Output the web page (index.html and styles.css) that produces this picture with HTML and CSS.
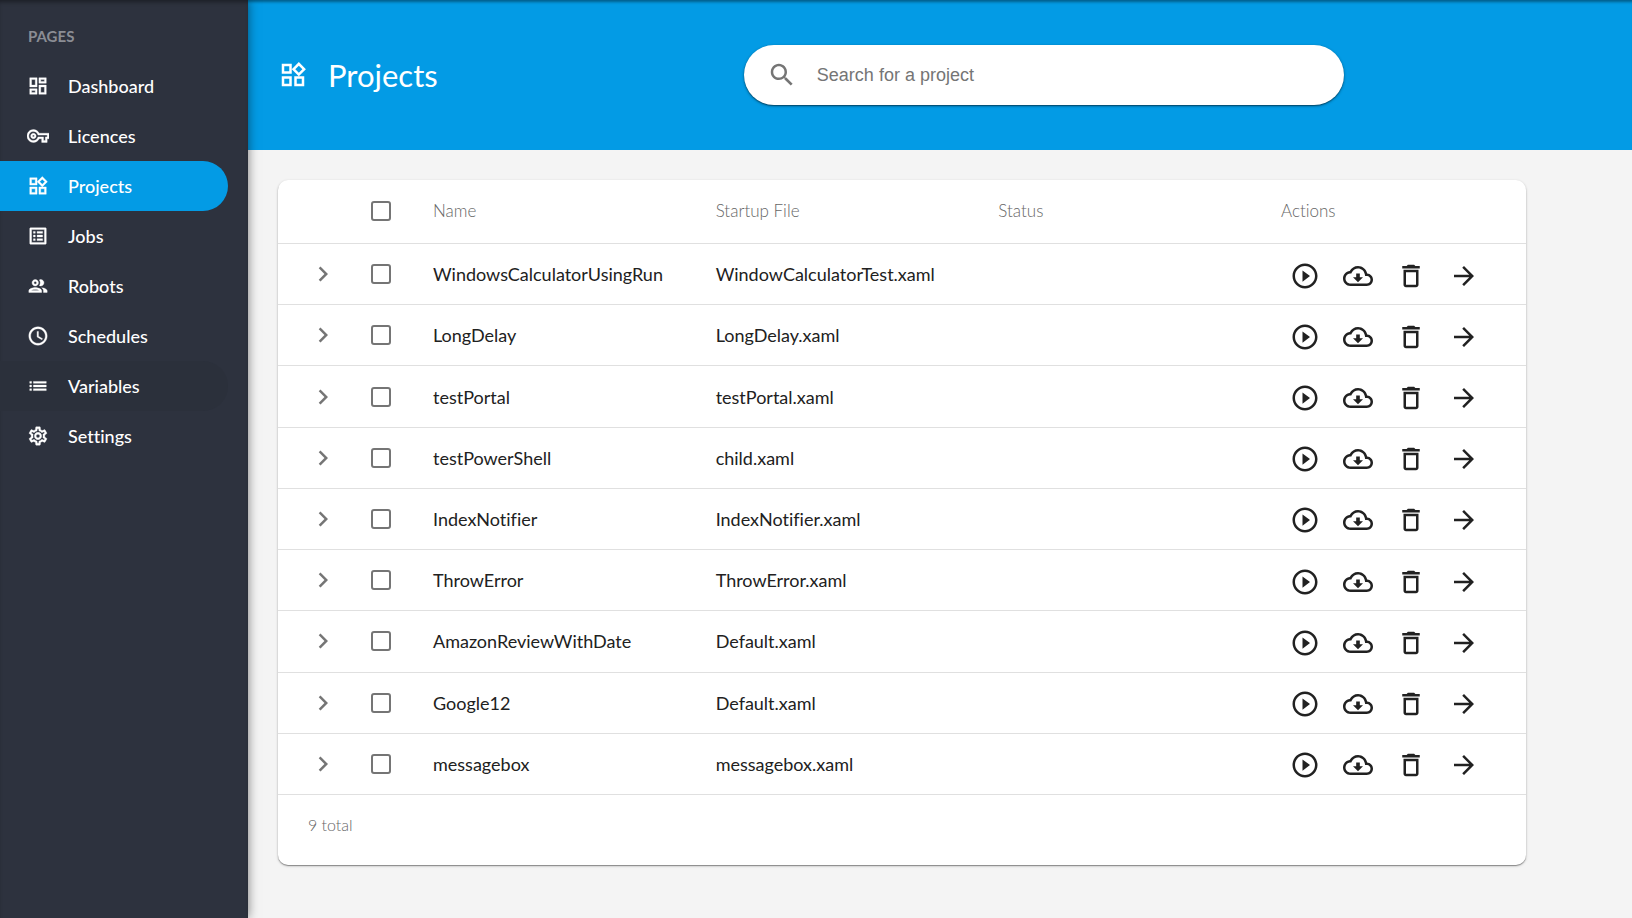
FILE: index.html
```html
<!DOCTYPE html>
<html lang="en">
<head>
<meta charset="utf-8">
<title>Projects</title>
<link rel="stylesheet" href="styles.css">
</head>
<body>
<svg class="sprite" aria-hidden="true">
  <symbol id="dashboard" viewBox="0 0 24 24"><path d="M19 5v2h-4V5h4M9 5v6H5V5h4m10 8v6h-4v-6h4M9 17v2H5v-2h4M21 3h-8v6h8V3zM11 3H3v10h8V3zm10 8h-8v10h8V11zm-10 4H3v6h8v-6z"/></symbol>
  <symbol id="key" viewBox="0 0 24 24"><path d="M22 19h-6v-4h-2.68c-1.14 2.42-3.6 4-6.32 4-3.86 0-7-3.14-7-7s3.14-7 7-7c2.72 0 5.17 1.58 6.32 4H24v6h-2v4zm-4-2h2v-4h2v-2H11.94l-.23-.67C11.01 8.34 9.11 7 7 7c-2.76 0-5 2.24-5 5s2.24 5 5 5c2.11 0 4.01-1.34 4.71-3.33l.23-.67H18v4zM7 15c-1.65 0-3-1.35-3-3s1.35-3 3-3 3 1.35 3 3-1.35 3-3 3zm0-4c-.55 0-1 .45-1 1s.45 1 1 1 1-.45 1-1-.45-1-1-1z"/></symbol>
  <symbol id="widgets" viewBox="0 0 24 24"><path d="M16.66 4.52l2.83 2.83-2.83 2.83-2.83-2.83 2.83-2.83M9 5v4H5V5h4m10 10v4h-4v-4h4M9 15v4H5v-4h4m7.66-13.31L11 7.34 16.66 13l5.66-5.66-5.66-5.65zM11 3H3v8h8V3zm10 10h-8v8h8v-8zm-10 0H3v8h8v-8z"/></symbol>
  <symbol id="jobs" viewBox="0 0 24 24"><path d="M19 5v14H5V5h14m1.1-2H3.9c-.5 0-.9.4-.9.9v16.2c0 .4.4.9.9.9h16.2c.4 0 .9-.5.9-.9V3.9c0-.5-.5-.9-.9-.9zM11 7h6v2h-6V7zm0 4h6v2h-6v-2zm0 4h6v2h-6zM7 7h2v2H7zm0 4h2v2H7zm0 4h2v2H7z"/></symbol>
  <symbol id="people" viewBox="0 0 24 24"><path d="M9 13.75c-2.34 0-7 1.17-7 3.5V19h14v-1.75c0-2.33-4.66-3.5-7-3.5zM4.34 17c.84-.58 2.87-1.25 4.66-1.25s3.82.67 4.66 1.25H4.34zM9 12c1.93 0 3.5-1.57 3.5-3.5S10.930 5 9 5 5.500 6.570 5.500 8.500 7.070 12 9 12zm0-5c.83 0 1.500.67 1.500 1.500S9.830 10 9 10s-1.500-.67-1.500-1.500S8.170 7 9 7zm7.040 6.810c1.160.84 1.960 1.960 1.960 3.440V19h4v-1.750c0-2.020-3.500-3.170-5.960-3.440zM15 12c1.930 0 3.500-1.570 3.500-3.500S16.930 5 15 5c-.54 0-1.040.13-1.500.35.63.89 1 1.980 1 3.150s-.37 2.260-1 3.150c.46.22.96.35 1.500.35z"/></symbol>
  <symbol id="clock" viewBox="0 0 24 24"><path d="M11.990 2C6.470 2 2 6.480 2 12s4.470 10 9.990 10C17.520 22 22 17.520 22 12S17.520 2 11.990 2zM12 20c-4.420 0-8-3.580-8-8s3.580-8 8-8 8 3.580 8 8-3.580 8-8 8zm.5-13H11v6l5.250 3.150.75-1.230-4.500-2.670z"/></symbol>
  <symbol id="list" viewBox="0 0 24 24"><path d="M3 13h2v-2H3v2zm0 4h2v-2H3v2zm0-8h2V7H3v2zm4 4h14v-2H7v2zm0 4h14v-2H7v2zM7 7v2h14V7H7z"/></symbol>
  <symbol id="gear" viewBox="0 0 24 24"><path d="M19.430 12.980c.04-.32.07-.64.07-.98s-.03-.66-.07-.98l2.110-1.650c.19-.15.24-.42.12-.64l-2-3.460c-.12-.22-.39-.3-.61-.22l-2.490 1c-.52-.4-1.080-.73-1.690-.98l-.38-2.650C14.460 2.180 14.250 2 14 2h-4c-.25 0-.46.18-.49.42l-.38 2.650c-.61.25-1.170.59-1.690.98l-2.490-1c-.23-.09-.49 0-.61.22l-2 3.460c-.13.22-.07.49.12.64l2.110 1.650c-.04.32-.07.65-.07.98s.03.66.07.98l-2.110 1.650c-.19.15-.24.42-.12.64l2 3.460c.12.22.39.3.61.22l2.490-1c.52.4 1.080.73 1.690.98l.38 2.650c.03.24.24.42.49.42h4c.25 0 .46-.18.49-.42l.38-2.650c.61-.25 1.170-.59 1.690-.98l2.490 1c.23.09.49 0 .61-.22l2-3.460c.12-.22.07-.49-.12-.64l-2.110-1.650zm-1.980-1.710c.04.31.05.52.05.73s-.02.43-.05.73l-.14 1.130.89.7 1.080.84-.7 1.210-1.270-.51-1.040-.42-.9.68c-.43.32-.84.56-1.250.73l-1.060.43-.16 1.130-.2 1.350h-1.400l-.19-1.350-.16-1.130-1.060-.43c-.43-.18-.83-.41-1.230-.71l-.91-.7-1.060.43-1.270.51-.7-1.210 1.080-.84.89-.7-.14-1.130c-.03-.31-.05-.54-.05-.74s.02-.43.05-.73l.14-1.130-.89-.7-1.080-.84.7-1.210 1.270.51 1.040.42.9-.68c.43-.32.84-.56 1.250-.73l1.060-.43.16-1.130.2-1.350h1.390l.19 1.350.16 1.130 1.060.43c.43.18.83.41 1.230.71l.91.7 1.060-.43 1.270-.51.7 1.210-1.070.85-.89.7.14 1.130zM12 8c-2.210 0-4 1.790-4 4s1.790 4 4 4 4-1.790 4-4-1.790-4-4-4zm0 6c-1.100 0-2-.9-2-2s.9-2 2-2 2 .9 2 2-.9 2-2 2z"/></symbol>
  <symbol id="search" viewBox="0 0 24 24"><path d="M15.500 14h-.79l-.28-.27C15.410 12.590 16 11.110 16 9.500 16 5.910 13.090 3 9.500 3S3 5.910 3 9.500 5.910 16 9.500 16c1.610 0 3.090-.59 4.230-1.570l.27.28v.79l5 4.990L20.490 19l-4.990-5zm-6 0C7.010 14 5 11.990 5 9.500S7.010 5 9.500 5 14 7.010 14 9.500 11.990 14 9.500 14z"/></symbol>
  <symbol id="chevron" viewBox="0 0 24 24"><path d="M10 6L8.590 7.410 13.170 12l-4.580 4.590L10 18l6-6z"/></symbol>
  <symbol id="play" viewBox="0 0 24 24"><path d="M10 16.500l6-4.500-6-4.500v9zM12 2C6.480 2 2 6.480 2 12s4.480 10 10 10 10-4.480 10-10S17.520 2 12 2zm0 18c-4.410 0-8-3.590-8-8s3.590-8 8-8 8 3.590 8 8-3.590 8-8 8z"/></symbol>
  <symbol id="cloud" viewBox="0 0 24 24"><path d="M19.350 10.040C18.670 6.590 15.640 4 12 4 9.110 4 6.610 5.640 5.360 8.040 2.350 8.360 0 10.900 0 14c0 3.310 2.690 6 6 6h13c2.760 0 5-2.240 5-5 0-2.640-2.050-4.780-4.650-4.960zM19 18H6c-2.210 0-4-1.790-4-4 0-2.050 1.530-3.760 3.560-3.970l1.070-.11.5-.95C8.080 7.140 9.940 6 12 6c2.620 0 4.880 1.860 5.390 4.430l.3 1.500 1.530.11c1.560.1 2.780 1.410 2.780 2.960 0 1.650-1.350 3-3 3zm-5.550-8h-2.900v3H8l4 4 4-4h-2.550z"/></symbol>
  <symbol id="trash" viewBox="0 0 24 24"><path d="M6 19c0 1.100.9 2 2 2h8c1.100 0 2-.9 2-2V7H6v12zM8 9h8v10H8V9zm7.500-5l-1-1h-5l-1 1H5v2h14V4z"/></symbol>
  <symbol id="arrow" viewBox="0 0 24 24"><path d="M12 4l-1.410 1.410L16.170 11H4v2h12.170l-5.580 5.590L12 20l8-8z"/></symbol>
</svg>
<div class="app">
  <nav class="sidebar" aria-label="Pages">
    <h2 class="sidebar-title">PAGES</h2>
    <a class="nav-item" href="#dashboard"><svg class="nav-icon"><use href="#dashboard"/></svg>Dashboard</a>
    <a class="nav-item" href="#licences"><svg class="nav-icon"><use href="#key"/></svg>Licences</a>
    <a class="nav-item active" href="#projects" aria-current="page"><svg class="nav-icon"><use href="#widgets"/></svg>Projects</a>
    <a class="nav-item" href="#jobs"><svg class="nav-icon"><use href="#jobs"/></svg>Jobs</a>
    <a class="nav-item" href="#robots"><svg class="nav-icon"><use href="#people"/></svg>Robots</a>
    <a class="nav-item" href="#schedules"><svg class="nav-icon"><use href="#clock"/></svg>Schedules</a>
    <a class="nav-item hovered" href="#variables"><svg class="nav-icon"><use href="#list"/></svg>Variables</a>
    <a class="nav-item" href="#settings"><svg class="nav-icon"><use href="#gear"/></svg>Settings</a>
  </nav>
  <div class="page">
    <header class="page-header">
      <svg class="icon"><use href="#widgets"/></svg>
      <h1 class="page-title">Projects</h1>
      <div class="search-area">
        <label class="search">
          <svg class="search-icon" role="img" aria-label="Search"><use href="#search"/></svg>
          <input class="search-input" type="text" placeholder="Search for a project">
        </label>
      </div>
    </header>
    <main class="content">
      <section class="card">
        <table class="projects">
          <colgroup><col class="col-expand"><col class="col-check"><col><col><col><col class="col-actions"></colgroup>
          <thead>
            <tr><th></th><th><input class="check" type="checkbox" aria-label="Select all"></th><th>Name</th><th>Startup File</th><th>Status</th><th>Actions</th></tr>
          </thead>
          <tbody id="rows"></tbody>
        </table>
        <footer class="card-footer">9 total</footer>
      </section>
    </main>
  </div>
</div>
<script src="app.js"></script>
</body>
</html>
```
FILE: app.js
```js
const projects = [
  ["WindowsCalculatorUsingRun", "WindowCalculatorTest.xaml"],
  ["LongDelay", "LongDelay.xaml"],
  ["testPortal", "testPortal.xaml"],
  ["testPowerShell", "child.xaml"],
  ["IndexNotifier", "IndexNotifier.xaml"],
  ["ThrowError", "ThrowError.xaml"],
  ["AmazonReviewWithDate", "Default.xaml"],
  ["Google12", "Default.xaml"],
  ["messagebox", "messagebox.xaml"]
];
const button = (icon, label) =>
  `<button class="icon-button" type="button" aria-label="${label}"><svg class="icon"><use href="#${icon}"/></svg></button>`;

document.getElementById("rows").innerHTML = projects.map(([name, file]) => `
  <tr>
    <td class="expand">${button("chevron", "Expand " + name)}</td>
    <td><input class="check" type="checkbox" aria-label="Select ${name}"></td>
    <td>${name}</td>
    <td>${file}</td>
    <td></td>
    <td><div class="actions">${button("play", "Run")}${button("cloud", "Download")}${button("trash", "Delete")}${button("arrow", "Open")}</div></td>
  </tr>`).join("");
```
FILE: styles.css
```css
* { box-sizing: border-box; }
body {
  margin: 0;
  background: #f4f4f4;
  color: #212121;
  font-family: Lato, "Open Sans", sans-serif;
  font-size: 18px;
  font-variant-ligatures: none;
}
.sprite { display: none; }
svg { display: block; fill: currentColor; flex: none; }
.icon { width: 30px; height: 30px; }
.app { display: flex; min-height: 100vh; }
.sidebar {
  position: relative;
  flex: none;
  width: 248px;
  background: #2d323e;
  color: #fff;
  box-shadow: 0 0 10px rgba(0, 0, 0, .5), inset 0 4px 4px -2px rgba(0, 0, 0, .4);
}
.sidebar-title {
  margin: 0;
  padding: 12px 28px 0;
  height: 61px;
  line-height: 48px;
  font-size: 15px;
  font-weight: 700;
  color: #8a8d94;
}
.nav-item {
  display: flex;
  align-items: center;
  gap: 19px;
  width: 228px;
  height: 50px;
  padding-left: 27px;
  border-radius: 0 25px 25px 0;
  color: #fff;
  text-decoration: none;
  font-weight: 500;
}
.nav-icon { width: 22px; height: 22px; stroke: currentColor; stroke-width: 0.4; }
.active { background: #039be5; }
.hovered { background: #2b303b; }
.page { flex: 1; min-width: 0; }
.page-header {
  display: flex;
  align-items: center;
  height: 150px;
  padding-left: 30px;
  background: #039be5;
  color: #fff;
  box-shadow: inset 0 4px 3px -2px rgba(0, 0, 0, .4);
}
.page-title { margin: 0 0 0 20px; font-size: 31px; font-weight: 400; }
.search-area { flex: 1; display: flex; justify-content: center; padding-left: 18px; }
.search {
  display: flex;
  align-items: center;
  gap: 20px;
  width: 600px;
  height: 60px;
  padding: 0 23px;
  border-radius: 30px;
  background: #fff;
  color: #757575;
  box-shadow: 0 1px 3px rgba(0, 0, 0, .4), 0 1px 1px rgba(0, 0, 0, .3);
}
.search-icon { width: 30px; height: 30px; }
.search-input {
  flex: 1;
  min-width: 0;
  border: 0;
  outline: 0;
  padding: 0;
  background: none;
  font: 18px "Liberation Sans", sans-serif;
  color: #212121;
}
.search-input::placeholder { color: #757575; }
.content { padding: 30px; }
.card {
  max-width: 1248px;
  background: #fff;
  border-radius: 10px;
  box-shadow: 0 1px 1px rgba(0, 0, 0, .35), 0 1px 3px rgba(0, 0, 0, .2);
}
.projects { width: 100%; height: 615px; table-layout: fixed; border-collapse: separate; border-spacing: 0; }
.col-expand { width: 85px; }
.col-check { width: 70px; }
.col-actions { width: 245px; }
th, td { padding: 0; text-align: left; vertical-align: middle; border-bottom: 1px solid #e0e0e0; }
th { height: 64px; padding-bottom: 2px; font-size: 17px; font-weight: 300; color: #666; }
td { height: 61px; }
td.expand { padding-left: 30px; }
.check {
  appearance: none;
  display: block;
  width: 20px;
  height: 20px;
  margin: 0 0 0 8px;
  border: 2px solid #757575;
  border-radius: 3px;
}
.actions { display: flex; gap: 23px; padding: 3px 0 0 9px; }
.icon-button { display: block; padding: 0; border: 0; background: none; color: #212121; cursor: pointer; }
.expand .icon-button { color: #757575; }
.card-footer { height: 70px; padding: 0 30px; line-height: 60px; font-size: 16px; font-weight: 300; color: #666; }
```
